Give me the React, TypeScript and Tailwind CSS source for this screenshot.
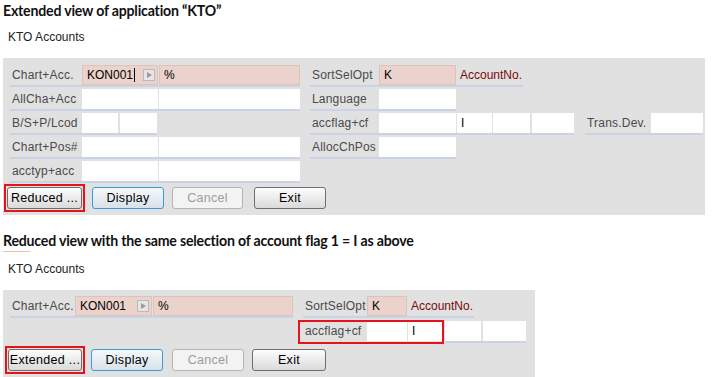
import React from "react";

const ui = "font-['Liberation_Sans',Arial,sans-serif]";

function Label({ text, w }: { text: string; w: string }) {
  return (
    <div className={`${w} h-[20px] flex items-center pl-[2px] text-[12px] text-[#4a4a4a] tracking-[0.2px]`}>
      {text}
    </div>
  );
}

function Box({ w, pink, children }: { w: string; pink?: boolean; children?: React.ReactNode }) {
  return (
    <div
      className={`${w} h-[20px] flex items-center pl-[4px] text-[12px] text-black ${
        pink ? "bg-[#ebd3cc] border border-[#dcc4bc]" : "bg-white"
      }`}
    >
      {children}
    </div>
  );
}

function Group({ children, className = "" }: { children: React.ReactNode; className?: string }) {
  return <div className={`flex items-start h-[22px] border-b-2 border-[#cad3e6] ${className}`}>{children}</div>;
}

function Arrow() {
  return (
    <div className="ml-auto mr-[2px] w-[12px] h-[12px] border border-[#b9b9b9] bg-[#e6e6e6] flex items-center justify-center">
      <svg width="5" height="6" viewBox="0 0 5 6">
        <path d="M0 0 L5 3 L0 6 Z" fill="#9a9a9a" />
      </svg>
    </div>
  );
}

function Btn({
  text,
  w,
  kind = "normal",
}: {
  text: string;
  w: string;
  kind?: "normal" | "focus" | "disabled";
}) {
  const styles = {
    normal: "border-[#6e6e6e] bg-gradient-to-b from-[#fdfdfd] to-[#dadada] text-black",
    focus: "border-[#3d9ad8] bg-gradient-to-b from-[#f4f8fb] to-[#d8e2ea] text-black",
    disabled: "border-[#b4b4b4] bg-[#f3f3f3] text-[#9c9c9c]",
  }[kind];
  return (
    <div
      className={`${w} h-[22px] rounded-[3px] border flex items-center justify-center text-[12.5px] tracking-[0.3px] ${styles}`}
    >
      {text}
    </div>
  );
}

export default function App() {
  return (
    <div className={`w-[713px] h-[377px] bg-white overflow-hidden ${ui}`}>
      {/* extended view */}
      <div className="pl-[3px] mt-[1px] h-[20px] leading-[20px] text-[14.15px] font-bold text-[#111] font-['Lato',sans-serif] tracking-[-0.2px]">
        Extended view of application “KTO”
      </div>
      <div className="pl-[8px] mt-[8px] h-[16px] leading-[16px] text-[12px] text-[#222]">KTO Accounts</div>

      <div className="ml-[3px] mt-[13px] w-[702px] h-[157px] bg-[#e1e1e1] pt-[7px] pl-[7px]">
        <div className="flex flex-col gap-[2px]">
          <div className="flex">
            <div className="w-[300px]">
              <Group className="w-[290px]">
                <Label text="Chart+Acc." w="w-[72px]" />
                <Box w="w-[76px]" pink>
                  <span>KON001</span>
                  <span className="ml-[1px] w-[1px] h-[14px] bg-black" />
                  <Arrow />
                </Box>
                <div className="w-[1px]" />
                <Box w="w-[141px]" pink>
                  %
                </Box>
              </Group>
            </div>
            <Group>
              <Label text="SortSelOpt" w="w-[69px]" />
              <Box w="w-[77px]" pink>
                K
              </Box>
              <div className="h-[20px] flex items-center pl-[4px] pr-[1px] text-[12px] text-[#7a0a0a]">AccountNo.</div>
            </Group>
          </div>

          <div className="flex">
            <div className="w-[300px]">
              <Group className="w-[290px]">
                <Label text="AllCha+Acc" w="w-[72px]" />
                <Box w="w-[76px]" />
                <div className="w-[1px]" />
                <Box w="w-[141px]" />
              </Group>
            </div>
            <Group>
              <Label text="Language" w="w-[69px]" />
              <Box w="w-[77px]" />
            </Group>
          </div>

          <div className="flex">
            <div className="w-[300px]">
              <Group className="w-[147px]">
                <Label text="B/S+P/Lcod" w="w-[72px]" />
                <Box w="w-[36px]" />
                <div className="w-[2px]" />
                <Box w="w-[37px]" />
              </Group>
            </div>
            <Group>
              <Label text="accflag+cf" w="w-[69px]" />
              <Box w="w-[77px]" />
              <div className="w-[1px]" />
              <Box w="w-[35px]">I</Box>
              <div className="w-[1px]" />
              <Box w="w-[37px]" />
              <div className="w-[2px]" />
              <Box w="w-[42px]" />
            </Group>
            <div className="w-[11px]" />
            <Group>
              <Label text="Trans.Dev." w="w-[66px]" />
              <Box w="w-[52px]" />
            </Group>
          </div>

          <div className="flex">
            <div className="w-[300px]">
              <Group className="w-[290px]">
                <Label text="Chart+Pos#" w="w-[72px]" />
                <Box w="w-[76px]" />
                <div className="w-[1px]" />
                <Box w="w-[141px]" />
              </Group>
            </div>
            <Group>
              <Label text="AllocChPos" w="w-[69px]" />
              <Box w="w-[77px]" />
            </Group>
          </div>

          <div className="flex">
            <Group className="w-[290px]">
              <Label text="acctyp+acc" w="w-[72px]" />
              <Box w="w-[76px]" />
              <div className="w-[1px]" />
              <Box w="w-[141px]" />
            </Group>
          </div>
        </div>

        <div className="flex items-center -ml-[6px] mt-[1px]">
          <div className="border-2 border-[#e5141b] p-[1px]">
            <Btn text="Reduced ..." w="w-[75px]" />
          </div>
          <div className="w-[7px]" />
          <Btn text="Display" w="w-[72px]" kind="focus" />
          <div className="w-[8px]" />
          <Btn text="Cancel" w="w-[71px]" kind="disabled" />
          <div className="w-[11px]" />
          <Btn text="Exit" w="w-[72px]" />
        </div>
      </div>

      {/* reduced view */}
      <div className="pl-[3px] mt-[16px] h-[20px] leading-[20px] text-[14.15px] font-bold text-[#111] font-['Lato',sans-serif] tracking-[-0.2px]">
        Reduced view with the same selection of account flag 1 = I as above
      </div>
      <div className="ml-[3px] w-[27px] h-[1px] bg-[#f2b9b9]" />
      <div className="pl-[8px] mt-[9px] h-[16px] leading-[16px] text-[12px] text-[#222]">KTO Accounts</div>

      <div className="ml-[3px] mt-[13px] w-[532px] h-[90px] bg-[#e1e1e1] pt-[6px] pl-[7px]">
        <div className="flex">
          <div className="w-[293px]">
            <Group className="w-[283px]">
              <Label text="Chart+Acc." w="w-[65px]" />
              <Box w="w-[77px]" pink>
                <span>KON001</span>
                <Arrow />
              </Box>
              <div className="w-[1px]" />
              <Box w="w-[140px]" pink>
                %
              </Box>
            </Group>
          </div>
          <Group>
            <Label text="SortSelOpt" w="w-[64px]" />
            <Box w="w-[40px]" pink>
              K
            </Box>
            <div className="h-[20px] flex items-center pl-[4px] pr-[1px] text-[12px] text-[#7a0a0a]">AccountNo.</div>
          </Group>
        </div>

        <div className="flex mt-[3px]">
          <div className="w-[289px]" />
          <div className="flex items-start h-[22px] outline-2 outline-[#e5141b] -outline-offset-1">
            <div className="w-[4px]" />
            <Label text="accflag+cf" w="w-[64px]" />
            <Box w="w-[40px]" />
            <div className="w-[1px]" />
            <Box w="w-[35px]">I</Box>
          </div>
          <div className="w-[2px]" />
          <Group>
            <Box w="w-[36px]" />
            <div className="w-[2px]" />
            <Box w="w-[43px]" />
          </Group>
        </div>

        <div className="flex items-center -ml-[5px] mt-[3px]">
          <div className="border-2 border-[#e5141b] p-[1px]">
            <Btn text="Extended ..." w="w-[74px]" />
          </div>
          <div className="w-[6px]" />
          <Btn text="Display" w="w-[72px]" kind="focus" />
          <div className="w-[9px]" />
          <Btn text="Cancel" w="w-[72px]" kind="disabled" />
          <div className="w-[8px]" />
          <Btn text="Exit" w="w-[74px]" />
        </div>
      </div>
    </div>
  );
}
